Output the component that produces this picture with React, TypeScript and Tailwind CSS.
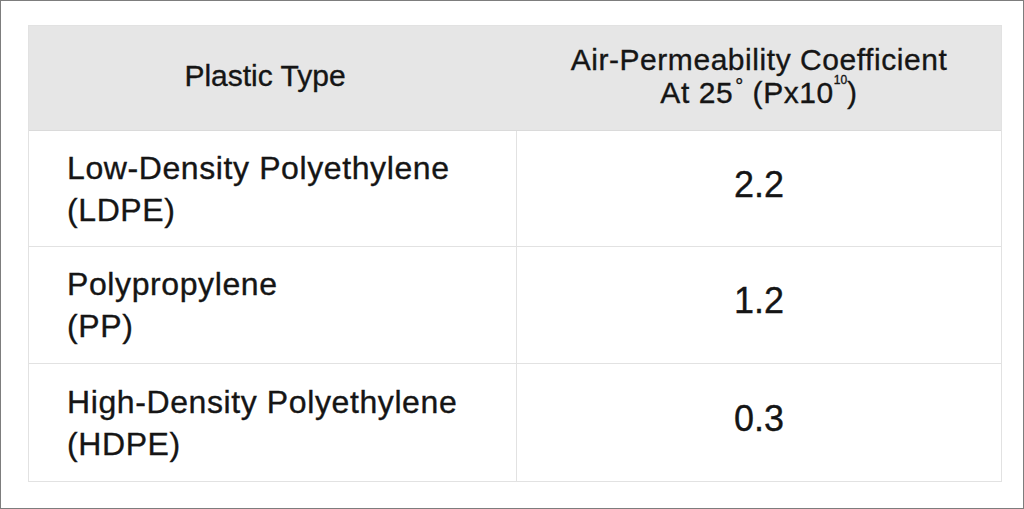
const rows = [
  { name: "Low-Density Polyethylene", code: "(LDPE)", value: "2.2" },
  { name: "Polypropylene", code: "(PP)", value: "1.2" },
  { name: "High-Density Polyethylene", code: "(HDPE)", value: "0.3" },
];

export default function App() {
  return (
    <div className="w-[1024px] h-[509px] bg-white border border-[#7d7d7d] pl-[27px] pt-[24px] font-['Liberation_Sans',Arial,sans-serif] text-[#151515] [-webkit-text-stroke:0.35px_#151515]">
      <div className="w-[974px] border border-[#e2e2e2]">
        <div className="grid grid-cols-[488px_1fr] h-[105px] bg-[#e6e6e6] border-b border-[#dadada]">
          <div className="flex items-center justify-center pr-[16px] pb-[6px] text-[30px] leading-[33px]">
            Plastic Type
          </div>
          <div className="flex flex-col items-center justify-center pb-[4px] text-[30px] leading-[33px] tracking-[0.55px]">
            <span>Air-Permeability Coefficient</span>
            <span>
              At 25<span className="inline-block align-top text-[20px] leading-[20px] ml-[2px]">°</span>&nbsp;(Px10<span className="inline-block align-top text-[12px] leading-[12px] -mt-[2px] tracking-normal">10</span>)
            </span>
          </div>
        </div>
        {rows.map((r, i) => (
          <div
            key={r.code}
            className={`grid grid-cols-[488px_1fr] ${i === 0 ? "h-[116px]" : "h-[117px]"} ${i < rows.length - 1 ? "border-b border-[#e2e2e2]" : ""}`}
          >
            <div className="flex flex-col justify-center pl-[38px] border-r border-[#e2e2e2] text-[32px] leading-[42px] tracking-[0.6px]">
              <span>{r.name}</span>
              <span>{r.code}</span>
            </div>
            <div className="flex items-center justify-center pb-[8px] text-[36px]">{r.value}</div>
          </div>
        ))}
      </div>
    </div>
  );
}
